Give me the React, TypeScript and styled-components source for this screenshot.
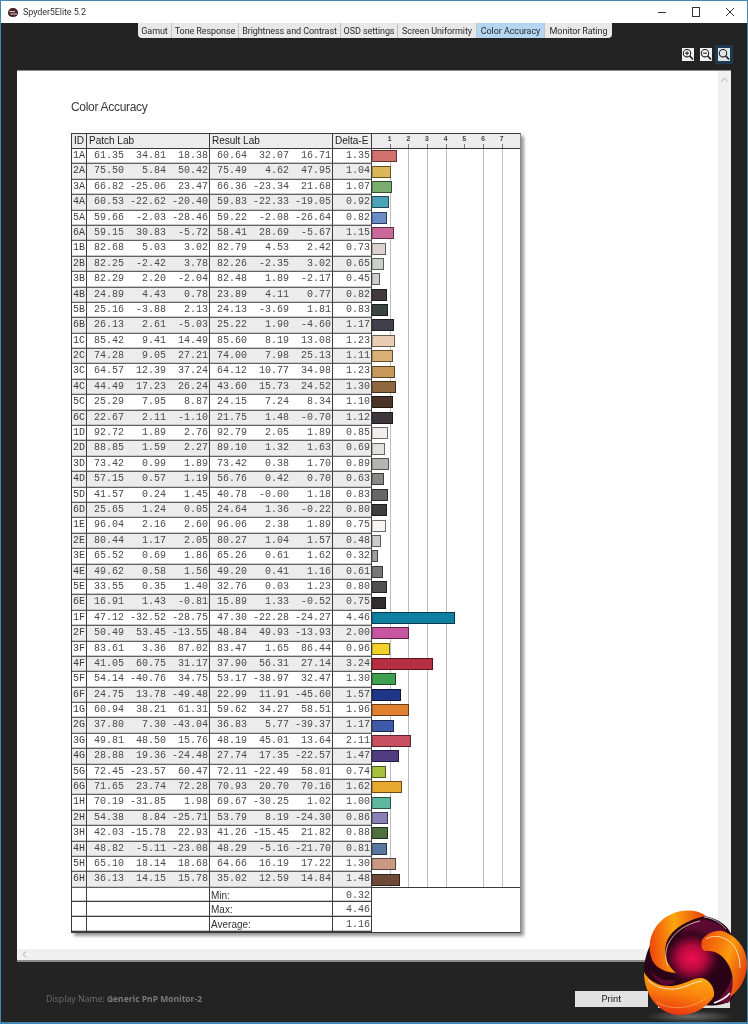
import React from "react";
import styled, { createGlobalStyle } from "styled-components";

const GlobalStyle = createGlobalStyle`
  html, body { margin: 0; padding: 0; background: #232323; }
  * { box-sizing: border-box; }
`;

const UNIT = 18.7;
const RAW = `1A 61.35 34.81 18.38 60.64 32.07 16.71 1.35 #d2726e
2A 75.50 5.84 50.42 75.49 4.62 47.95 1.04 #dcb75a
3A 66.82 -25.06 23.47 66.36 -23.34 21.68 1.07 #78ad6f
4A 60.53 -22.62 -20.40 59.83 -22.33 -19.05 0.92 #4ba3b8
5A 59.66 -2.03 -28.46 59.22 -2.08 -26.64 0.82 #6c8cc8
6A 59.15 30.83 -5.72 58.41 28.69 -5.67 1.15 #c8699a
1B 82.68 5.03 3.02 82.79 4.53 2.42 0.73 #ddd3ce
2B 82.25 -2.42 3.78 82.26 -2.35 3.02 0.65 #ccd0cc
3B 82.29 2.20 -2.04 82.48 1.89 -2.17 0.45 #ccccd2
4B 24.89 4.43 0.78 23.89 4.11 0.77 0.82 #423a3a
5B 25.16 -3.88 2.13 24.13 -3.69 1.81 0.83 #3a4442
6B 26.13 2.61 -5.03 25.22 1.90 -4.60 1.17 #40404c
1C 85.42 9.41 14.49 85.60 8.19 13.08 1.23 #e8ccb4
2C 74.28 9.05 27.21 74.00 7.98 25.13 1.11 #d8b078
3C 64.57 12.39 37.24 64.12 10.77 34.98 1.23 #c8985a
4C 44.49 17.23 26.24 43.60 15.73 24.52 1.30 #8f6840
5C 25.29 7.95 8.87 24.15 7.24 8.34 1.10 #4a3428
6C 22.67 2.11 -1.10 21.75 1.48 -0.70 1.12 #3e383c
1D 92.72 1.89 2.76 92.79 2.05 1.89 0.85 #f2eeec
2D 88.85 1.59 2.27 89.10 1.32 1.63 0.69 #e0e0dc
3D 73.42 0.99 1.89 73.42 0.38 1.70 0.89 #b4b4b0
4D 57.15 0.57 1.19 56.76 0.42 0.70 0.63 #8a8a88
5D 41.57 0.24 1.45 40.78 -0.00 1.18 0.83 #666664
6D 25.65 1.24 0.05 24.64 1.36 -0.22 0.80 #3e3e3e
1E 96.04 2.16 2.60 96.06 2.38 1.89 0.75 #f8f4f2
2E 80.44 1.17 2.05 80.27 1.04 1.57 0.48 #cccccc
3E 65.52 0.69 1.86 65.26 0.61 1.62 0.32 #a0a0a0
4E 49.62 0.58 1.56 49.20 0.41 1.16 0.61 #787878
5E 33.55 0.35 1.40 32.76 0.03 1.23 0.80 #505050
6E 16.91 1.43 -0.81 15.89 1.33 -0.52 0.75 #2e2c2c
1F 47.12 -32.52 -28.75 47.30 -22.28 -24.27 4.46 #0f7f9f
2F 50.49 53.45 -13.55 48.84 49.93 -13.93 2.00 #c8559f
3F 83.61 3.36 87.02 83.47 1.65 86.44 0.96 #f2d22a
4F 41.05 60.75 31.17 37.90 56.31 27.14 3.24 #b82e42
5F 54.14 -40.76 34.75 53.17 -38.97 32.47 1.30 #3fa050
6F 24.75 13.78 -49.48 22.99 11.91 -45.60 1.57 #1f3585
1G 60.94 38.21 61.31 59.62 34.27 58.51 1.96 #e08030
2G 37.80 7.30 -43.04 36.83 5.77 -39.37 1.17 #3f5aa8
3G 49.81 48.50 15.76 48.19 45.01 13.64 2.11 #c85060
4G 28.88 19.36 -24.48 27.74 17.35 -22.57 1.47 #503c80
5G 72.45 -23.57 60.47 72.11 -22.49 58.01 0.74 #a8c040
6G 71.65 23.74 72.28 70.93 20.70 70.16 1.62 #e8a830
1H 70.19 -31.85 1.98 69.67 -30.25 1.02 1.00 #5fb8a0
2H 54.38 8.84 -25.71 53.79 8.19 -24.30 0.86 #8a80b8
3H 42.03 -15.78 22.93 41.26 -15.45 21.82 0.88 #4f6f40
4H 48.82 -5.11 -23.08 48.29 -5.16 -21.70 0.81 #5878a0
5H 65.10 18.14 18.68 64.66 16.19 17.22 1.30 #c89880
6H 36.13 14.15 15.78 35.02 12.59 14.84 1.48 #6f4a38`;

const ROWS = RAW.split("\n").map((l) => l.split(" "));
const TABS = ["Gamut", "Tone Response", "Brightness and Contrast", "OSD settings", "Screen Uniformity", "Color Accuracy", "Monitor Rating"];
const TAB_WIDTHS = [34, 67, 102, 57, 79, 68, 67];

const Win = styled.div`
  position: relative;
  width: 748px;
  height: 1024px;
  overflow: hidden;
  display: flex;
  flex-direction: column;
  background: #232323;
  border: 1px solid #3f88b4;
  border-bottom-width: 2px;
  filter: blur(0.3px);
`;
const TitleBar = styled.div`
  height: 22px;
  flex: none;
  background: #fff;
  display: flex;
  align-items: center;
  padding-left: 7px;
  font: 9px "Roboto", sans-serif;
  color: #333;
`;
const TitleText = styled.span`
  margin-left: 5px;
  flex: 1;
  letter-spacing: -0.1px;
`;
const WinButton = styled.span`
  width: 34px;
  height: 22px;
  display: flex;
  align-items: center;
  justify-content: center;
`;
const TabRow = styled.div`
  flex: none;
  height: 15px;
  display: flex;
  padding-left: 137px;
`;
const Tab = styled.div<{ $active?: boolean }>`
  height: 15px;
  display: flex;
  align-items: center;
  justify-content: center;
  white-space: nowrap;
  font: 9px "Roboto", sans-serif;
  letter-spacing: -0.08px;
  color: #2c2c2c;
  background: ${(p) => (p.$active ? "#b4d6f2" : "#e8e8e8")};
  border-right: 1px solid #c4c4c4;
  &:first-child { border-bottom-left-radius: 4px; }
  &:last-child { border-bottom-right-radius: 4px; border-right: none; }
`;
const ToolRow = styled.div`
  flex: none;
  height: 32px;
  display: flex;
  justify-content: flex-end;
  align-items: center;
  gap: 6px;
  padding: 1px 17px 0 0;
`;
const ToolButton = styled.div<{ $active?: boolean }>`
  width: 12px;
  height: 13px;
  display: flex;
  align-items: center;
  justify-content: center;
  background: ${(p) => (p.$active ? "#dfe6ea" : "#f2f2f2")};
  box-shadow: ${(p) => (p.$active ? "0 0 0 3px #1f3a50" : "none")};
`;
const Panel = styled.div`
  flex: none;
  margin-left: 16px;
  width: 714px;
  height: 892px;
  display: grid;
  grid-template-columns: 1fr 13px;
  grid-template-rows: 1fr 11px;
  background: #f0f0f0;
  border-top: 1px solid #8c8c8c;
  border-bottom: 2px solid #8c8c8c;
`;
const Page = styled.div`
  background: #fff;
  padding: 27px 0 0 54px;
  overflow: hidden;
`;
const ReportTitle = styled.div`
  font: 12px/18px "Liberation Sans", sans-serif;
  letter-spacing: -0.3px;
  color: #3a3a3a;
  margin-bottom: 17px;
`;
const ScrollArrow = styled.div`
  display: flex;
  justify-content: center;
  padding-top: 6px;
`;
const HScroll = styled.div`
  grid-column: 1 / 3;
  display: flex;
  align-items: center;
  padding-left: 5px;
`;
const Report = styled.div`
  width: 450px;
  background: #fff;
  border: 1px solid #3a3a3a;
  border-right-color: #8a8a8a;
  box-shadow: 3px 3px 3px #9a9a9a;
`;
const Row = styled.div<{ $h: number; $shade?: boolean }>`
  display: grid;
  grid-template-columns: 15px 123px 123px 39px 1fr;
  height: ${(p) => p.$h}px;
  --cell: ${(p) => (p.$shade ? "#ececec" : "#fff")};
`;
const Cell = styled.div<{ $line?: string }>`
  background: var(--cell);
  border-right: 1px solid #3c3c3c;
  border-bottom: 1px solid ${(p) => p.$line || "#626262"};
  box-shadow: inset 0 -1px 0 #c8c8c8;
  overflow: hidden;
  white-space: nowrap;
`;
const HeadCell = styled(Cell)`
  padding-left: 2px;
  font: 10px/14px "Liberation Sans", sans-serif;
  color: #222;
  box-shadow: none;
`;
const IdCell = styled(Cell)`
  font: 10px/13px "Liberation Mono", monospace;
  color: #3c3c3c;
  padding-left: 1px;
`;
const Triple = styled(Cell)`
  display: grid;
  grid-template-columns: 37px 42px 42px;
  font: 10px/13px "Liberation Mono", monospace;
  color: #4a4a4a;
  text-align: right;
`;
const Delta = styled(Cell)<{ $tall?: boolean }>`
  font: 10px/${(p) => (p.$tall ? 15 : 13)}px "Liberation Mono", monospace;
  color: #4a4a4a;
  text-align: right;
  padding-right: 1px;
`;
const FootLabel = styled(Cell)`
  font: 10px/15px "Liberation Sans", sans-serif;
  color: #333;
  padding-left: 1px;
`;
const ChartHead = styled.div`
  display: flex;
  background: #ececec;
  border-bottom: 1px solid #3c3c3c;
`;
const Tick = styled.div`
  width: ${UNIT}px;
  flex: none;
  text-align: right;
  font: bold 7px/10px "Liberation Mono", monospace;
  color: #444;
  height: 14px;
  border-right: 1px solid #777;
  border-image: linear-gradient(to bottom, transparent 10px, #777 10px) 1;
`;
const TickLabel = styled.span`
  display: inline-block;
  transform: translateX(2px);
`;
const ChartCell = styled.div`
  background-image: repeating-linear-gradient(to right, transparent 0, transparent ${UNIT - 1}px, #bdbdbd ${UNIT - 1}px, #bdbdbd ${UNIT}px);
  background-size: ${UNIT * 7}px 100%;
  background-repeat: no-repeat;
  display: flex;
  align-items: center;
  padding-bottom: 1px;
`;
const Bar = styled.div`
  height: 12px;
  border: 1px solid rgba(0, 0, 0, 0.55);
  border-left-color: rgba(0, 0, 0, 0.25);
`;
const EmptyChart = styled.div<{ $first?: boolean }>`
  ${(p) => (p.$first ? "margin-top: -1px; border-top: 1px solid #3c3c3c;" : "")}
`;
const Footer = styled.div`
  flex: 1;
  display: flex;
  align-items: center;
  padding: 13px 99px 0 45px;
  font: 8.8px "Open Sans", sans-serif;
  color: #6e6e6e;
`;
const FooterName = styled.b`
  margin-left: 2px;
  font-size: 8.5px;
  color: #7a7a7a;
`;
const FooterText = styled.div`
  flex: 1;
`;
const PrintButton = styled.div`
  width: 73px;
  height: 16px;
  background: #e2e2e2;
  color: #222;
  font: 9.5px/16px "Roboto", sans-serif;
  text-align: center;
`;
const SideButton = styled.div`
  position: absolute;
  left: 657px;
  top: 991px;
  width: 72px;
  height: 16px;
  background: #e2e2e2;
`;
const Logo = styled.svg`
  position: absolute;
  left: 639px;
  top: 907px;
`;
const LogoShadow = styled.div`
  position: absolute;
  left: 645px;
  top: 1009px;
  width: 88px;
  height: 13px;
  border-radius: 50%;
  background: radial-gradient(closest-side, #6a6a6a, rgba(70, 70, 70, 0));
`;

const Magnifier: React.FC<{ sign?: "plus" | "minus" }> = ({ sign }) => (
  <svg width="12" height="13" viewBox="0 0 12 13" fill="none" stroke="#222" strokeWidth="1.1">
    <circle cx="5" cy="5.2" r="3.7" />
    <path d="M7.8 8 L11 11.5" strokeWidth="1.8" />
    {sign && <path d="M3 5.2 H7" />}
    {sign === "plus" && <path d="M5 3.2 V7.2" />}
  </svg>
);

const SpyderLogo = () => (
  <svg width="10" height="9" viewBox="0 0 10 9">
    <path d="M5 0 C8 0 10 2 10 5 C10 7.5 8 9 5 9 C2 9 0 7.5 0 5 C0 2 2 0 5 0 Z" fill="#4a2228" />
    <path d="M1.5 3.6 H7 M2.5 6 H9" stroke="#f2f2f2" strokeWidth="0.9" />
  </svg>
);

const HotLogo = () => (
  <Logo width="108" height="108" viewBox="-2 -2 108 108">
    <defs>
      <radialGradient id="core" cx="50%" cy="50%" r="50%">
        <stop offset="0" stopColor="#f00e4e" />
        <stop offset="0.4" stopColor="#b80a40" />
        <stop offset="0.75" stopColor="#40041f" />
        <stop offset="1" stopColor="#1e0212" stopOpacity="0" />
      </radialGradient>
      <linearGradient id="lobeA" x1="0" y1="0.4" x2="1" y2="0.3">
        <stop offset="0" stopColor="#ee4a0c" />
        <stop offset="0.45" stopColor="#fca60c" />
        <stop offset="1" stopColor="#e8420c" />
      </linearGradient>
      <linearGradient id="lobeB" x1="0" y1="0.2" x2="1" y2="0.7">
        <stop offset="0" stopColor="#f0500a" />
        <stop offset="0.55" stopColor="#fb9a0e" />
        <stop offset="1" stopColor="#e23a0e" />
      </linearGradient>
      <linearGradient id="lobeC" x1="0.3" y1="1" x2="0.6" y2="0">
        <stop offset="0" stopColor="#e82c10" />
        <stop offset="0.55" stopColor="#fb860c" />
        <stop offset="1" stopColor="#fcae10" />
      </linearGradient>
    </defs>
    <path d="M58 6 C72 6 86 14 90 26 C98 40 100 70 90 90 C78 98 60 96 44 92 C24 90 4 82 2 62 C2 42 12 22 30 12 C40 6 50 5 58 6 Z" fill="#2a0316" />
    <path d="M60 9 C74 11 84 18 88 28 C80 22 70 24 62 30 C54 26 46 24 38 26 C42 16 50 11 60 9 Z" fill="#5a0a30" />
    <path d="M8 60 C14 68 24 72 34 70 C30 78 16 78 8 60 Z" fill="#5a0a30" />
    <path d="M74 92 C82 84 88 76 90 66 C94 76 92 86 86 93 Z" fill="#6a0c34" />
    <ellipse cx="50" cy="48" rx="32" ry="30" fill="url(#core)" />
    <path d="M64 6 C56 0 44 -1 32 3 C14 10 6 26 8 42 C9 54 18 62 34 63 C26 56 21 46 24 34 C28 20 44 10 64 6 Z" fill="url(#lobeA)" />
    <path d="M58 11 C44 14 32 22 26 34 C23 42 23 50 26 56" fill="none" stroke="#ffe4b0" strokeWidth="0.9" opacity="0.85" />
    <path d="M60 30 C64 24 72 20 80 21 C94 25 105 38 105 54 C105 68 98 80 88 87 C92 76 92 64 86 54 C80 44 72 40 62 41 C59 38 59 34 60 30 Z" fill="url(#lobeB)" />
    <path d="M64 29 C72 24 84 26 92 36 C96 42 98 50 98 58" fill="none" stroke="#ffe4b0" strokeWidth="0.9" />
    <path d="M2 62 C6 70 16 77 30 76 C42 75 50 68 60 68 C68 70 73 78 72 86 C66 97 52 105 38 105 C18 105 2 86 2 62 Z" fill="url(#lobeC)" />
    <path d="M6 70 C14 78 26 81 38 78 C46 76 52 72 60 71" fill="none" stroke="#fff0d8" strokeWidth="0.9" />
    <path d="M14 92 C28 100 48 100 64 88" fill="none" stroke="#ffd080" strokeWidth="0.7" opacity="0.7" />
    <path d="M72 93 C78 91 84 88 88 83" fill="none" stroke="#fff" strokeWidth="1.6" />
    <path d="M62 7 C70 8 78 12 84 19" fill="none" stroke="#fff" strokeWidth="0.8" opacity="0.8" />
  </Logo>
);

export default function App() {
  return (
    <>
      <GlobalStyle />
      <Win>
        <TitleBar>
          <SpyderLogo />
          <TitleText>Spyder5Elite 5.2</TitleText>
          <WinButton>
            <svg width="10" height="10" viewBox="0 0 10 10"><path d="M1 5.5 H9" stroke="#333" /></svg>
          </WinButton>
          <WinButton>
            <svg width="10" height="10" viewBox="0 0 10 10"><rect x="1.5" y="0.5" width="7" height="9" fill="none" stroke="#333" /></svg>
          </WinButton>
          <WinButton>
            <svg width="10" height="10" viewBox="0 0 10 10"><path d="M1 1 L9 9 M9 1 L1 9" stroke="#333" /></svg>
          </WinButton>
        </TitleBar>
        <TabRow>
          {TABS.map((t, i) => (
            <Tab key={t} $active={t === "Color Accuracy"} style={{ width: TAB_WIDTHS[i] }}>{t}</Tab>
          ))}
        </TabRow>
        <ToolRow>
          <ToolButton><Magnifier sign="plus" /></ToolButton>
          <ToolButton><Magnifier sign="minus" /></ToolButton>
          <ToolButton $active><Magnifier /></ToolButton>
        </ToolRow>
        <Panel>
          <Page>
            <ReportTitle>Color Accuracy</ReportTitle>
            <Report>
              <Row $h={15} $shade>
                <HeadCell $line="#3c3c3c">ID</HeadCell>
                <HeadCell $line="#3c3c3c">Patch Lab</HeadCell>
                <HeadCell $line="#3c3c3c">Result Lab</HeadCell>
                <HeadCell $line="#3c3c3c">Delta-E</HeadCell>
                <ChartHead>
                  {[1, 2, 3, 4, 5, 6, 7].map((n) => (
                    <Tick key={n}><TickLabel>{n}</TickLabel></Tick>
                  ))}
                </ChartHead>
              </Row>
              {ROWS.map((r, i) => (
                <Row key={r[0]} $h={15.4} $shade={i % 2 === 1}>
                  <IdCell>{r[0]}</IdCell>
                  <Triple><span>{r[1]}</span><span>{r[2]}</span><span>{r[3]}</span></Triple>
                  <Triple><span>{r[4]}</span><span>{r[5]}</span><span>{r[6]}</span></Triple>
                  <Delta>{r[7]}</Delta>
                  <ChartCell>
                    <Bar style={{ width: parseFloat(r[7]) * UNIT, background: r[8] }} />
                  </ChartCell>
                </Row>
              ))}
              {[["Min:", "0.32"], ["Max:", "4.46"], ["Average:", "1.16"]].map(([label, val], i) => (
                <Row key={label} $h={14.6}>
                  <Cell $line="#3c3c3c" />
                  <Cell $line="#3c3c3c" />
                  <FootLabel $line="#3c3c3c">{label}</FootLabel>
                  <Delta $line="#3c3c3c" $tall>{val}</Delta>
                  <EmptyChart $first={i === 0} />
                </Row>
              ))}
            </Report>
          </Page>
          <ScrollArrow>
            <svg width="7" height="5" viewBox="0 0 7 5"><path d="M0.5 4.5 L3.5 1 L6.5 4.5" fill="none" stroke="#b0b0b0" /></svg>
          </ScrollArrow>
          <HScroll>
            <svg width="5" height="7" viewBox="0 0 5 7"><path d="M4.5 0.5 L1 3.5 L4.5 6.5" fill="none" stroke="#b0b0b0" /></svg>
          </HScroll>
        </Panel>
        <Footer>
          <FooterText>Display Name:<FooterName>Generic PnP Monitor-2</FooterName></FooterText>
          <PrintButton>Print</PrintButton>
        </Footer>
        <SideButton />
        <LogoShadow />
        <HotLogo />
      </Win>
    </>
  );
}
